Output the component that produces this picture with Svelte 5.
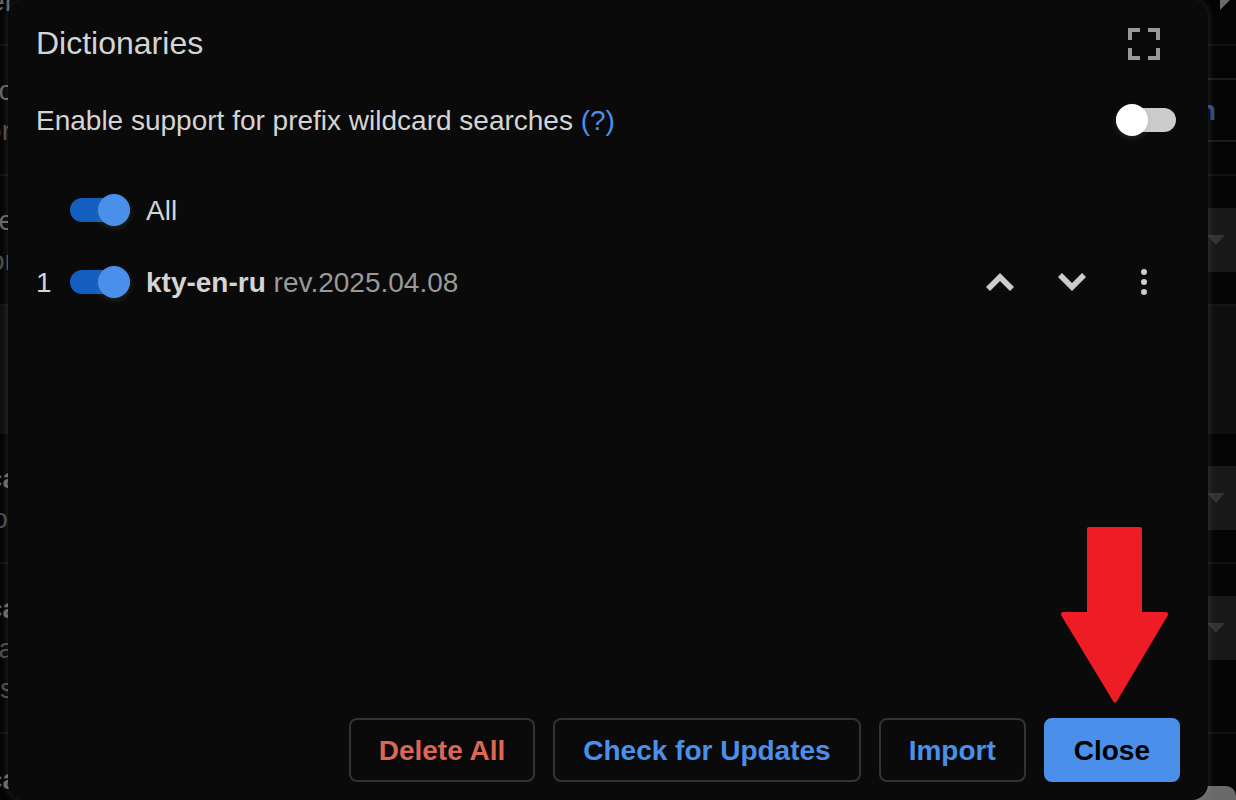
<script>
  let fullscreen = $state(false);
  let prefixSearch = $state(false);
  let dictionaries = $state([
    { title: 'kty-en-ru', revision: 'rev.2025.04.08', enabled: true }
  ]);
  let all = $derived(dictionaries.every((d) => d.enabled));

  function toggleAll(event) {
    for (const d of dictionaries) d.enabled = event.currentTarget.checked;
  }
</script>

{#snippet dropdown()}
  <span class="dropdown">
    <svg width="18" height="10" viewBox="0 0 18 10"><path d="M0 0h18L9 10z" /></svg>
  </span>
{/snippet}

<div class="screen">
  <div class="page" aria-hidden="true">
    <div class="row first">
      <div class="text"><span>er</span></div>
      <svg class="corner" width="10" height="10" viewBox="0 0 10 10"><path d="M0 0h10L0 10z" /></svg>
    </div>
    <div class="row tall">
      <div class="text tight"><b class="light">o</b><span>or</span></div>
      <span class="link">n</span>
    </div>
    <div class="row select">
      <div class="text"><b class="light">e</b><span>or</span></div>
      {@render dropdown()}
    </div>
    <div class="row panel"></div>
    <div class="row tall">
      <div class="text"><b>ca</b><span>ol</span></div>
      {@render dropdown()}
    </div>
    <div class="row taller">
      <div class="text"><b>ca</b><span>a</span><span>s</span></div>
      {@render dropdown()}
    </div>
    <div class="row last">
      <div class="text"><b>ca</b></div>
      <span class="scroll"></span>
    </div>
  </div>

  <div class="modal" role="dialog" aria-labelledby="title">
    <header>
      <h1 id="title">Dictionaries</h1>
      <button class="icon dim" aria-label="Expand" onclick={() => (fullscreen = !fullscreen)}>
        <svg width="32" height="32" viewBox="0 0 32 32"><path d="M0 0h12v4H4v8H0zM20 0h12v12h-4V4h-8zM0 20h4v8h8v4H0zM28 20h4v12H20v-4h8z" /></svg>
      </button>
    </header>

    <div class="setting">
      <p><label for="prefix">Enable support for prefix wildcard searches</label> <a href="#help">(?)</a></p>
      <input id="prefix" class="switch" type="checkbox" bind:checked={prefixSearch} />
    </div>

    <div class="list">
      <div class="item">
        <span class="index"></span>
        <input id="all" class="switch" type="checkbox" checked={all} onchange={toggleAll} />
        <label for="all">All</label>
      </div>
      {#each dictionaries as d, i}
        <div class="item">
          <span class="index">{i + 1}</span>
          <input id="dictionary-{i}" class="switch" type="checkbox" bind:checked={d.enabled} />
          <label for="dictionary-{i}"><strong>{d.title}</strong> <span class="revision">{d.revision}</span></label>
          <button class="icon" aria-label="Move up">
            <svg width="32" height="32" viewBox="0 0 32 32"><path d="M16 7l14 14-4 4-10-10L6 25l-4-4z" /></svg>
          </button>
          <button class="icon" aria-label="Move down">
            <svg width="32" height="32" viewBox="0 0 32 32"><path d="M16 25L2 11l4-4 10 10L26 7l4 4z" /></svg>
          </button>
          <button class="icon" aria-label="Menu">
            <svg width="32" height="32" viewBox="0 0 32 32"><circle cx="16" cy="6" r="3" /><circle cx="16" cy="16" r="3" /><circle cx="16" cy="26" r="3" /></svg>
          </button>
        </div>
      {/each}
    </div>

    <footer>
      <button class="action danger">Delete All</button>
      <button class="action">Check for Updates</button>
      <button class="action">Import</button>
      <div class="close">
        <svg class="pointer" width="108" height="176" viewBox="0 0 108 176"><path d="M29 0h51q2 0 2 2v83h24q2 0 2 3L57 174q-2 3-4 0L1 88q0-3 2-3h24V2q0-2 2-2z" /></svg>
        <button class="action primary">Close</button>
      </div>
    </footer>
  </div>
</div>

<style>
  :global(body) {
    margin: 0;
    background: #040404;
  }
  .screen {
    display: grid;
    grid-template: minmax(0, 1fr) / minmax(0, 1fr);
    height: 100vh;
    overflow: hidden;
    font: 28px/40px "Liberation Sans", Arial, sans-serif;
    color: #d4d4d4;
  }
  .page,
  .modal {
    grid-area: 1 / 1;
    box-sizing: border-box;
  }
  .page {
    display: flex;
    flex-direction: column;
    overflow: hidden;
    color: #4b4b4b;
  }
  .row {
    display: flex;
    flex: none;
    box-sizing: border-box;
    justify-content: space-between;
    align-items: center;
    height: 130px;
    border-bottom: 2px solid #111;
  }
  .first {
    height: 46px;
    align-items: flex-start;
  }
  .first .text {
    margin-top: -20px;
    color: #666;
  }
  .select {
    height: 128px;
    border-bottom: 0;
  }
  .panel {
    background: #0f0f0f;
    border-top: 2px solid #151515;
    border-bottom: 0;
  }
  .taller {
    height: 170px;
  }
  .taller .dropdown {
    align-self: flex-start;
    margin-top: 32px;
  }
  .last {
    flex: 1;
    align-items: stretch;
    border-bottom: 0;
  }
  .last .text {
    padding-top: 26px;
  }
  .text {
    display: flex;
    flex-direction: column;
    align-items: flex-end;
    width: 14px;
    padding-top: 2px;
  }
  .text b {
    margin-right: -4px;
    color: #666;
  }
  .text .light {
    margin-right: 0;
    font-weight: 400;
  }
  .tight span {
    margin-right: 3px;
  }
  .corner {
    margin-right: 6px;
    fill: #6a6a6a;
  }
  .link {
    box-sizing: border-box;
    width: 60px;
    height: 64px;
    padding-right: 20px;
    border: solid #1b1b1b;
    border-width: 2px 0;
    color: #264d80;
    font-weight: 700;
    line-height: 62px;
    text-align: right;
  }
  .dropdown {
    display: flex;
    align-items: center;
    justify-content: flex-end;
    box-sizing: border-box;
    width: 60px;
    height: 64px;
    padding-right: 11px;
    background: #181818;
    fill: #333;
  }
  .scroll {
    align-self: flex-end;
    width: 60px;
    height: 14px;
    border-top-right-radius: 10px;
    background: #6a6a6a;
  }
  .modal {
    display: flex;
    flex-direction: column;
    margin: 0 28px 0 8px;
    padding: 8px 28px 18px;
    border-radius: 16px;
    background: #0a0a0a;
    box-shadow: 0 0 8px rgba(255, 255, 255, 0.15);
  }
  header,
  .setting,
  .item {
    display: flex;
    align-items: center;
    height: 72px;
  }
  header {
    justify-content: space-between;
  }
  h1 {
    margin: 0;
    padding-bottom: 2px;
    font-size: 32px;
    font-weight: 400;
  }
  .setting {
    justify-content: space-between;
    padding: 4px 4px 18px 0;
  }
  p {
    margin: 0;
  }
  p,
  .index,
  .item label {
    padding-top: 2px;
  }
  a {
    color: #4a90eb;
    text-decoration: none;
  }
  .list {
    flex: 1;
  }
  .index {
    width: 34px;
  }
  .item label {
    flex: 1;
    margin-left: 16px;
  }
  .revision {
    color: #999;
  }
  .icon {
    display: flex;
    align-items: center;
    justify-content: center;
    width: 72px;
    height: 72px;
    padding: 0;
    border: 0;
    background: none;
    fill: #ccc;
  }
  .dim {
    fill: #999;
  }
  .switch {
    appearance: none;
    display: flex;
    align-items: center;
    width: 60px;
    height: 24px;
    margin: 0;
    border-radius: 12px;
    background: #ccc;
  }
  .switch::before {
    content: "";
    width: 32px;
    height: 32px;
    flex: none;
    border-radius: 50%;
    background: #fff;
    box-shadow: 0 2px 6px rgba(127, 127, 127, 0.25);
  }
  .switch:checked {
    justify-content: flex-end;
    background: #135fc0;
  }
  .switch:checked::before {
    background: #4a90eb;
  }
  footer {
    display: flex;
    justify-content: flex-end;
    gap: 18px;
  }
  .action {
    box-sizing: border-box;
    height: 64px;
    padding: 2px 28px 0;
    border: 2px solid #333;
    border-radius: 8px;
    background: none;
    color: #4a90eb;
    font: inherit;
    font-weight: 700;
  }
  .danger {
    color: #dd6655;
  }
  .primary {
    border-color: #4a90eb;
    background: #4a90eb;
    color: #000;
  }
  .close {
    position: relative;
  }
  .pointer {
    position: absolute;
    right: 12px;
    bottom: 79px;
    fill: #ee1c24;
  }
</style>
